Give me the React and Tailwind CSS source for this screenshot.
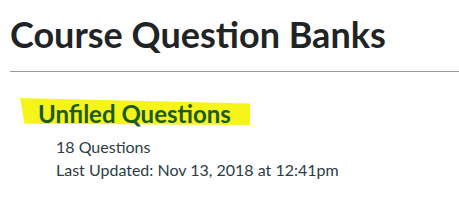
export default function App() {
  return (
    <div className="w-[459px] h-[217px] bg-white overflow-hidden font-['Lato','Noto_Sans',sans-serif] text-[#2d3b45]">
      <div className="pl-[10px] pt-[12px]">
        <h1 className="text-[36px] leading-[44px] font-bold text-[#1f2426]">
          Course Question Banks
        </h1>
        <div className="mt-[15px] h-px bg-[#9a9a9a]" />
      </div>

      <div className="pl-[38px] pt-[27px]">
        <h2 className="relative inline-block text-[24px] leading-[30px] font-bold text-[#1d5a1d]">
          <span
            className="absolute left-[-18px] top-[-1px] h-[27px] w-[230px] bg-[#f5f51a] [clip-path:polygon(0_0,100%_20%,100%_100%,2%_95%)]"
            aria-hidden
          />
          <span className="relative">Unfiled Questions</span>
        </h2>
      </div>

      <div className="pl-[56px] pt-[6px] text-[16px] leading-[23px] text-[#2d3b45]">
        <div>18 Questions</div>
        <div>Last Updated: Nov 13, 2018 at 12:41pm</div>
      </div>
    </div>
  );
}
